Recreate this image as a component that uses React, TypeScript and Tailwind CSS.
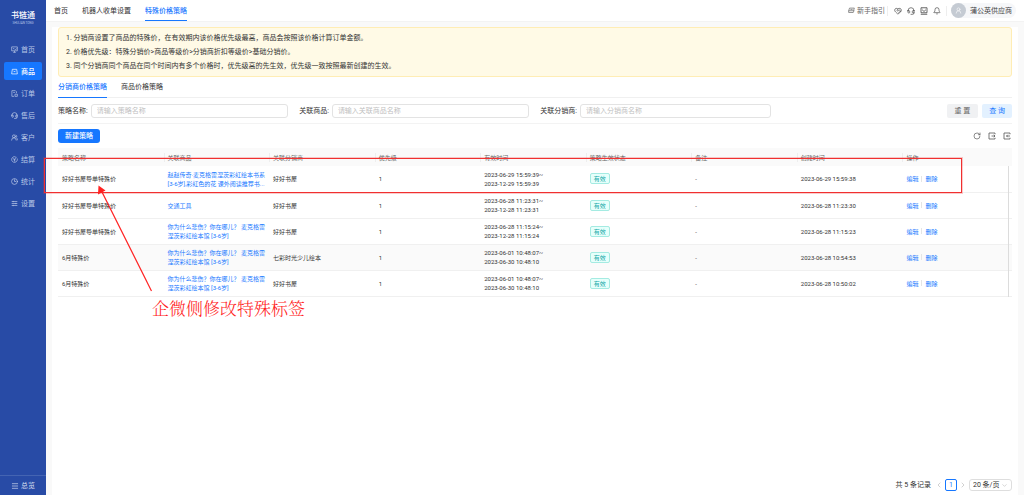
import type { ReactNode } from "react";
import {
  Bell,
  ChevronDown,
  ChevronLeft,
  ChevronRight,
  Clock3,
  Headset,
  HeartHandshake,
  Menu,
  RotateCw,
  UserRound,
  UsersRound,
} from "lucide-react";

function Glyph({ className, children }: { className: string; children: ReactNode }) {
  return (
    <svg viewBox="0 0 16 16" className={className} fill="none" stroke="currentColor" strokeWidth="1.6">
      {children}
    </svg>
  );
}

const menu = [
  {
    label: "首页",
    icon: (
      <Glyph className="size-[7px]">
        <path d="M1.500 2h13v9h-13zM5 14.500h6M8 11v3.500M4.500 6h3M9 7.500l1.500 1.500 2-3.500" />
      </Glyph>
    ),
  },
  {
    label: "商品",
    active: true,
    icon: (
      <Glyph className="size-[7px]">
        <path d="M3 3h10l1.500 10.500h-13zM5.500 6.500c.5 2 4.500 2 5 0" />
      </Glyph>
    ),
  },
  {
    label: "订单",
    icon: (
      <Glyph className="size-[7px]">
        <path d="M7 14.500H2v-13h8l2.500 2.500v3M5 5.500h4M9 9.500h5.500v5H9z" />
      </Glyph>
    ),
  },
  { label: "售后", icon: <Headset size={7} strokeWidth={2.5} /> },
  { label: "客户", icon: <UsersRound size={7} strokeWidth={2.5} /> },
  {
    label: "结算",
    icon: (
      <Glyph className="size-[7px]">
        <path d="M14 5.500A6.500 6.500 0 1 1 10.500 2M5.500 5L8 8l4.500-6M8 8v4.500M5.500 8.500h5" />
      </Glyph>
    ),
  },
  { label: "统计", icon: <Clock3 size={7} strokeWidth={2.5} /> },
  {
    label: "设置",
    icon: (
      <Glyph className="size-[7px]">
        <path d="M1.500 3.500h13M1.500 8h13M1.500 12.500h13M5 2v3M11 6.500v3M5 11v3" />
      </Glyph>
    ),
  },
];

const columns = ["策略名称", "关联商品", "关联分销商", "优先级", "有效时间", "策略生效状态", "备注", "创建时间", "操作"];

const sad = ["你为什么悲伤？你在哪儿？ 麦克格雷", "涅茨彩虹绘本馆 [3-6岁]"];

const rows = [
  {
    name: "好好书屋导单特殊价",
    goods: ["赵赵传奇·麦克格雷涅茨彩虹绘本书系", "[3-6岁],彩虹色的花 课外阅读推荐书..."],
    seller: "好好书屋",
    from: "2023-06-29 15:59:39~",
    to: "2023-12-29 15:59:39",
    created: "2023-06-29 15:59:38",
  },
  {
    name: "好好书屋导单特殊价",
    goods: ["交通工具"],
    seller: "好好书屋",
    from: "2023-06-28 11:23:31~",
    to: "2023-12-28 11:23:31",
    created: "2023-06-28 11:23:30",
  },
  {
    name: "好好书屋导单特殊价",
    goods: sad,
    seller: "好好书屋",
    from: "2023-06-28 11:15:24~",
    to: "2023-12-28 11:15:24",
    created: "2023-06-28 11:15:23",
  },
  {
    name: "6月特殊价",
    goods: sad,
    seller: "七彩时光少儿绘本",
    from: "2023-06-01 10:48:07~",
    to: "2023-06-30 10:48:10",
    created: "2023-06-28 10:54:53",
    hover: true,
  },
  {
    name: "6月特殊价",
    goods: sad,
    seller: "好好书屋",
    from: "2023-06-01 10:48:07~",
    to: "2023-06-30 10:48:10",
    created: "2023-06-28 10:50:02",
  },
];

function Sidebar() {
  return (
    <aside className="flex w-[46px] shrink-0 flex-col bg-[#284ba6] text-[#b9c7e6]">
      <div className="flex h-[38px] flex-col items-center pt-[10px] text-white">
        <span className="text-[8px] leading-[12px] font-medium">书链通</span>
        <span className="text-[3px] leading-[3px] text-[#b9c7e6]">SHULIAN TONG</span>
      </div>
      <nav className="flex flex-1 flex-col gap-1 px-1 pt-[2px]">
        {menu.map(({ label, icon, active }) => (
          <a
            key={label}
            href="#"
            className={
              active
                ? "flex h-[18px] items-center justify-center gap-[3px] rounded-[2px] bg-[#1677ff] pt-px font-medium text-white"
                : "flex h-[18px] items-center justify-center gap-[3px] pt-px"
            }
          >
            {icon}
            {label}
          </a>
        ))}
      </nav>
      <button className="flex h-5 items-center justify-center gap-[2px] border-t border-[#4464b2] text-[#d4ddf0]">
        <Menu size={8} strokeWidth={2} />
        总览
      </button>
    </aside>
  );
}

function Header() {
  return (
    <header className="flex h-[22px] shrink-0 items-stretch justify-between border-b border-[#f3f3f3] bg-white px-2">
      <nav className="flex gap-[14px]">
        <a href="#" className="flex items-center border-y border-transparent">首页</a>
        <a href="#" className="flex items-center border-y border-transparent">机器人收单设置</a>
        <a href="#" className="flex items-center border-y border-t-transparent border-b-[#1677ff] font-medium text-[#1677ff]">
          特殊价格策略
        </a>
      </nav>
      <div className="flex items-center text-[#444]">
        <a href="#" className="flex items-center gap-[2px] text-[#666]">
          <Glyph className="size-[7px]">
            <path d="M3.500 2.500h11l-2 6h-11zM1.500 8.500v4h10.500l2-5M5.500 5.500h5" />
          </Glyph>
          新手指引
        </a>
        <span className="mx-[2px] h-[10px] w-px bg-[#eee]" />
        <div className="flex items-center gap-[5px] pr-[3px] pl-1">
          <button aria-label="合作"><HeartHandshake size={8} /></button>
          <button aria-label="客服"><Headset size={8} /></button>
          <button aria-label="反馈">
            <Glyph className="size-2">
              <path d="M2 1.500h12v10H2zM1.500 14.500h13M5 6.500c1 2.500 5 2.500 6 0M5 4.500h1M10 4.500h1" />
            </Glyph>
          </button>
          <button aria-label="通知"><Bell size={8} /></button>
        </div>
        <span className="mr-1 ml-[2px] h-[10px] w-px bg-[#eee]" />
        <button className="flex h-[15px] items-center gap-1 rounded-full bg-[#f6f7f9] pr-1">
          <span className="flex size-[15px] items-center justify-center rounded-full bg-[#c5cbd3] text-white">
            <UserRound size={7} />
          </span>
          蒲公英供应商
        </button>
      </div>
    </header>
  );
}

function Field({ id, label, hint }: { id: string; label: string; hint: string }) {
  return (
    <div className="flex flex-1 items-center gap-[3px]">
      <label htmlFor={id} className="shrink-0">{label}:</label>
      <input
        id={id}
        placeholder={hint}
        className="h-[14px] w-full min-w-0 rounded-[3px] border border-[#e3e3e3] px-[5px] placeholder:text-[#bfbfbf]"
      />
    </div>
  );
}

function StrategyTable() {
  return (
    <table className="w-full table-fixed border-collapse text-left text-[6px] leading-[9px]">
      <thead>
        <tr className="h-[18px] bg-[#fafafa] text-[#666]">
          {columns.map((c, i) => (
            <th key={c} className="p-0 font-normal">
              <div className={i ? "h-[9px] border-l border-[#eee] pl-[3px]" : "h-[9px] pl-1"}>{c}</div>
            </th>
          ))}
          <td className="w-1 p-0" />
        </tr>
      </thead>
      <tbody>
        {rows.map((r) => (
          <tr
            key={r.created}
            className={r.hover ? "h-[26px] border-b border-[#f0f0f0] bg-[#fafafa]" : "h-[26px] border-b border-[#f0f0f0]"}
          >
            <td className="p-0 pl-1">{r.name}</td>
            <td className="p-0 pl-1 whitespace-nowrap">
              <a href="#" className="text-[#1677ff]">
                {r.goods.map((g) => (
                  <span key={g} className="block">{g}</span>
                ))}
              </a>
            </td>
            <td className="p-0 pl-1">{r.seller}</td>
            <td className="p-0 pl-1">1</td>
            <td className="p-0 pl-1 whitespace-nowrap">
              {r.from}
              <br />
              {r.to}
            </td>
            <td className="p-0 pl-1">
              <span className="inline-flex h-[11px] items-center rounded-[2px] border border-[#a4ebe2] bg-[#e6fffb] px-[3px] align-middle text-[#13a8a8]">
                有效
              </span>
            </td>
            <td className="p-0 pl-1">-</td>
            <td className="p-0 pl-1">{r.created}</td>
            <td className="p-0 pl-1">
              <div className="flex items-center gap-[3px] text-[#1677ff]">
                <a href="#">编辑</a>
                <span className="h-[6px] w-px bg-[#e5e5e5]" />
                <a href="#">删除</a>
              </div>
            </td>
            <td className="border-l border-[#dcdcdc] p-0" />
          </tr>
        ))}
      </tbody>
    </table>
  );
}

function Annotation() {
  return (
    <div className="pointer-events-none absolute inset-0 text-[#f22]">
      <div className="absolute top-[158px] right-[62px] left-[44px] h-[35px] border border-[#f03030] ring-1 ring-[#f03030]/25" />
      <svg className="absolute top-[185px] left-[96px] h-[108px] w-[57px]" viewBox="0 0 57 108">
        <path d="M55.500 106L6 7" stroke="currentColor" strokeWidth="1.2" />
        <path d="M2.500 0.500L9.500 5.500L2 9.500Z" fill="currentColor" />
      </svg>
      <p className="absolute top-[299px] left-[152px] font-['Liberation_Serif','Noto_Serif_CJK_SC','Noto_Sans_CJK_SC',serif] text-[17px] leading-[21px] font-light">
        企微侧修改特殊标签
      </p>
    </div>
  );
}

export default function App() {
  return (
    <div className="relative flex min-h-screen bg-[#f9f9f9] font-[Roboto,'Noto_Sans_CJK_SC',sans-serif] text-[7px] leading-[10px] text-[#333]">
      <Sidebar />
      <div className="flex min-w-0 flex-1 flex-col">
        <Header />
        <main className="mx-[6px] mt-[5px] flex flex-1 flex-col bg-white px-[6px]">
          <ol className="rounded-[3px] border border-[#ffedb5] bg-[#fffae6] px-[7px] py-[3px] leading-[14px]">
            <li>1. 分销商设置了商品的特殊价，在有效期内该价格优先级最高，商品会按照该价格计算订单金额。</li>
            <li>2. 价格优先级：特殊分销价&gt;商品等级价&gt;分销商折扣等级价&gt;基础分销价。</li>
            <li>3. 同个分销商同个商品在同个时间内有多个价格时，优先级高的先生效，优先级一致按照最新创建的生效。</li>
          </ol>
          <nav className="flex h-[21px] gap-[14px] border-b border-[#f0f0f0]">
            <a href="#" className="-mb-px flex items-center border-b border-[#1677ff] font-medium text-[#1677ff]">分销商价格策略</a>
            <a href="#" className="flex items-center">商品价格策略</a>
          </nav>
          <form className="flex h-[26px] items-center gap-[176px] border-b border-[#f3f3f3]">
            <div className="flex flex-1 gap-[11px]">
              <Field id="strategy" label="策略名称" hint="请输入策略名称" />
              <Field id="goods" label="关联商品" hint="请输入关联商品名称" />
              <Field id="seller" label="关联分销商" hint="请输入分销商名称" />
            </div>
            <div className="flex gap-1">
              <button type="reset" className="h-[14px] rounded-[2px] bg-[#f0f1f3] px-2 text-[#666]">重 置</button>
              <button type="button" className="h-[14px] rounded-[2px] bg-[#e3f1ff] px-[7px] text-[#1677ff]">查 询</button>
            </div>
          </form>
          <div className="flex h-6 items-center justify-between">
            <button className="h-[14px] rounded-[3px] bg-[#1677ff] px-[7px] font-medium text-white">新建策略</button>
            <div className="flex items-center gap-[7px] pr-px text-[#555]">
              <button aria-label="刷新"><RotateCw size={8} /></button>
              <button aria-label="导出">
                <Glyph className="size-2">
                  <path d="M14 4.500V2H2v12h12v-2.500M7 8h7M11.500 5.500L14 8l-2.500 2.500" />
                </Glyph>
              </button>
              <button aria-label="导入">
                <Glyph className="size-2">
                  <path d="M14 4.500V2H2v12h12v-2.500M14 8H7M9.500 5.500L7 8l2.500 2.500" />
                </Glyph>
              </button>
            </div>
          </div>
          <StrategyTable />
          <footer className="mt-auto flex h-5 items-center justify-end gap-[2px]">
            <span className="mr-[2px]">共 5 条记录</span>
            <button aria-label="上一页" className="text-[#bbb]"><ChevronLeft size={8} /></button>
            <button className="size-3 rounded-[2px] border border-[#1677ff] text-[#1677ff]">1</button>
            <button aria-label="下一页" className="text-[#bbb]"><ChevronRight size={8} /></button>
            <div className="relative">
              <select aria-label="每页条数" className="h-3 w-[43px] appearance-none rounded-[3px] border border-[#dedede] bg-white pl-[3px]">
                <option>20 条/页</option>
              </select>
              <ChevronDown size={7} className="pointer-events-none absolute top-[3px] right-1 text-[#bbb]" />
            </div>
          </footer>
        </main>
      </div>
      <Annotation />
    </div>
  );
}
